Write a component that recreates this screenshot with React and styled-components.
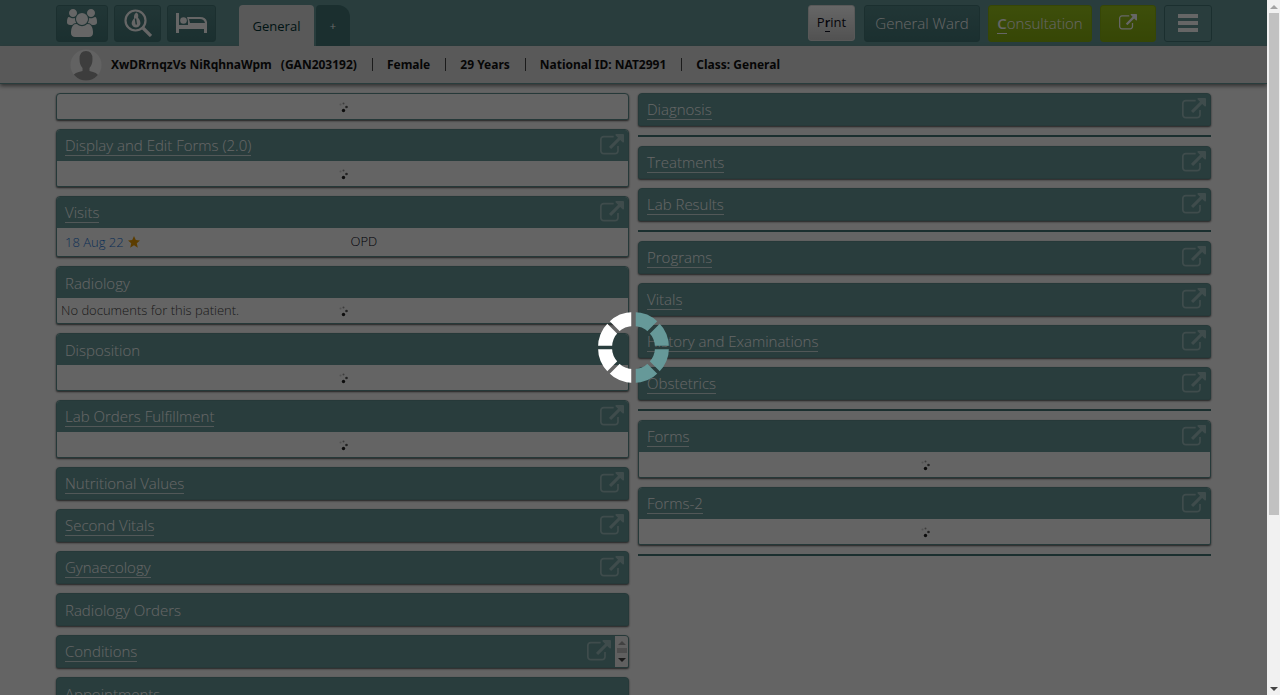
import React from "react";
import styled, { createGlobalStyle } from "styled-components";

const GlobalStyle = createGlobalStyle`
  * { box-sizing: border-box; }
  body { margin: 0; background: #fafafa; font-family: "Open Sans", sans-serif; color: #222; }
  button { font-family: inherit; }
`;

const Window = styled.div`
  display: grid;
  grid-template-columns: 1fr 13px;
  height: 100vh;
  overflow: hidden;
`;
const Page = styled.div`
  position: relative;
  overflow: hidden;
  background: #fafafa;
`;

const Header = styled.header`
  display: flex;
  justify-content: space-between;
  height: 46px;
  padding: 5px 55px 0 56px;
  background: #669999;
`;
const Group = styled.div`
  display: flex;
  gap: ${(p) => p.$gap}px;
`;
const ToolButton = styled.button`
  display: flex;
  align-items: center;
  justify-content: center;
  width: ${(p) => p.$width}px;
  height: 37px;
  padding: 0 0 2px;
  border: 1px solid #447777;
  border-radius: 3px;
  background: ${(p) => (p.$flat ? "transparent" : "linear-gradient(#558888, #447777)")};
  color: #fff;
  font-size: 15px;
  font-weight: 300;
`;
const GreenButton = styled(ToolButton)`
  border-color: #88b010;
  background: linear-gradient(#9ac41c, #88b010);
`;
const PrintButton = styled(ToolButton)`
  height: 36px;
  margin-right: 1px;
  border-color: #ddd;
  background: linear-gradient(#fff, #ccc);
  color: #112;
  font-size: 13px;
  font-weight: 400;
`;
const AccessKey = styled.span`
  font-weight: 600;
  border-bottom: 1px solid currentColor;
`;
const Tabs = styled.nav`
  display: flex;
  gap: 2px;
  margin-left: 17px;
`;
const Tab = styled.button`
  width: ${(p) => (p.$active ? 75 : 34)}px;
  height: 41px;
  padding: 0;
  border: 0;
  border-radius: ${(p) => (p.$active ? "4px 4px 0 0" : "4px 12px 0 0")};
  background: ${(p) => (p.$active ? "#dfdfdf" : "#447777")};
  color: ${(p) => (p.$active ? "#003333" : "#fff")};
  font-size: ${(p) => (p.$active ? 13 : 11)}px;
`;

const PatientBar = styled.section`
  display: flex;
  align-items: center;
  height: 38px;
  padding: 0 70px;
  background: #dfdfdf;
  border-bottom: 1px solid #669999;
  box-shadow: 0 2px 4px #777;
  font-family: "Noto Sans", sans-serif;
  font-size: 12px;
  font-weight: 700;
  color: #111;
`;
const PatientName = styled.span`
  margin: 0 9px;
`;
const Fact = styled.span`
  display: flex;
  align-items: center;
  &::before {
    content: "";
    width: 1px;
    height: 13px;
    margin: 0 14px 0 15px;
    background: #444;
  }
`;

const Columns = styled.main`
  display: grid;
  grid-template-columns: 1fr 1fr;
  gap: 9px;
  align-items: start;
  padding: 9px 56px 0;
`;
const Column = styled.div`
  display: flex;
  flex-direction: column;
  gap: 9px;
`;
const Card = styled.section`
  border: 1px solid #609090;
  border-radius: 4px 4px 2px 2px;
  background: ${(p) => (p.$headOnly ? "#669999" : "#fafafa")};
  box-shadow: 0 1px 2px #555;
  overflow: hidden;
`;
const CardHead = styled.div`
  display: flex;
  align-items: center;
  justify-content: space-between;
  height: 31px;
  padding-left: 8px;
  background: #669999;
`;
const CardTitle = styled.h2`
  margin: 0;
  font-size: 15px;
  line-height: 20px;
  font-weight: 300;
  color: #fff;
`;
const TitleLink = styled.a`
  display: block;
  color: inherit;
  text-decoration: none;
  border-bottom: 1px solid #ccdddd;
`;
const HeadTools = styled.div`
  display: flex;
  align-items: center;
  align-self: stretch;
`;
const OpenLink = styled.a`
  display: flex;
  margin-right: 4px;
  color: #9dbdbd;
`;
const CardBody = styled.div`
  display: grid;
  grid-template-columns: 1fr 1fr;
  align-items: center;
  height: ${(p) => (p.$tall ? 28 : 25)}px;
  font-size: 13px;
  font-weight: 300;
`;
const VisitDate = styled.a`
  display: flex;
  align-items: center;
  gap: 4px;
  padding-left: 8px;
  color: #1f78d8;
  text-decoration: none;
`;
const VisitType = styled.span`
  padding: 0 0 2px 8px;
  color: #001;
`;
const Note = styled.span`
  grid-area: 1 / 1;
  padding: 0 0 2px 4px;
  color: #444;
`;
const Busy = styled.span`
  display: flex;
  grid-area: 1 / 1 / 2 / 3;
  justify-self: center;
`;
const Rule = styled.hr`
  width: 100%;
  height: 2px;
  margin: 0;
  border: 0;
  background: #447777;
`;

const ScrollTrack = styled.div`
  display: flex;
  flex-direction: column;
  align-items: center;
  width: 13px;
  height: 100%;
  padding: ${(p) => (p.$small ? "2px 0" : "0")};
  background: #f1f1f1;
`;
const ScrollLane = styled.div`
  flex: 1;
  width: 10px;
`;
const ScrollThumb = styled.div`
  height: ${(p) => (p.$small ? "5px" : "75%")};
  background: #c1c1c1;
`;
const ArrowBox = styled.span`
  display: flex;
  align-items: center;
  justify-content: center;
  height: ${(p) => (p.$small ? 10 : 13)}px;
`;

const Shade = styled.div`
  position: absolute;
  inset: 0;
  display: flex;
  align-items: center;
  justify-content: center;
  background: rgba(0, 0, 0, 0.6);
`;

const ExternalIcon = ({ size }) => (
  <svg width={size} height={size} viewBox="0 0 1792 1792" fill="currentColor" aria-hidden="true">
    <path d="M1408 928v320q0 119-84.500 203.500t-203.500 84.500h-832q-119 0-203.500-84.500t-84.500-203.500v-832q0-119 84.500-203.500t203.500-84.500h704q14 0 23 9t9 23v64q0 14-9 23t-23 9h-704q-66 0-113 47t-47 113v832q0 66 47 113t113 47h832q66 0 113-47t47-113v-320q0-14 9-23t23-9h64q14 0 23 9t9 23zm384-864v512q0 26-19 45t-45 19-45-19l-176-176-652 652q-10 10-23 10t-23-10l-114-114q-10-10-10-23t10-23l652-652-176-176q-19-19-19-45t19-45 45-19h512q26 0 45 19t19 45z" />
  </svg>
);
const UsersIcon = () => (
  <svg width="30" height="28" viewBox="0 0 1920 1792" fill="currentColor" aria-hidden="true">
    <path d="M593 896q-162 5-265 128h-134q-82 0-138-40.500t-56-118.500q0-353 124-353 6 0 43.500 21t97.500 42.500 119 21.500q67 0 133-23-5 37-5 66 0 139 81 256zm1071 637q0 120-73 189.500t-194 69.500h-874q-121 0-194-69.500t-73-189.500q0-53 3.500-103.500t14-109 26.500-108.500 43-97.500 62-81 85.500-53.500 111.500-20q10 0 43 21.500t73 48 107 48 135 21.500 135-21.500 107-48 73-48 43-21.500q61 0 111.500 20t85.500 53.500 62 81 43 97.500 26.500 108.500 14 109 3.500 103.500zm-1024-1277q0 106-75 181t-181 75-181-75-75-181 75-181 181-75 181 75 75 181zm704 384q0 159-112.500 271.500t-271.500 112.500-271.500-112.500-112.500-271.500 112.500-271.500 271.500-112.500 271.500 112.500 112.500 271.500zm576 225q0 78-56 118.500t-138 40.500h-134q-103-123-265-128 81-117 81-256 0-29-5-66 66 23 133 23 59 0 119-21.500t97.500-42.500 43.500-21q124 0 124 353zm-128-609q0 106-75 181t-181 75-181-75-75-181 75-181 181-75 181 75 75 181z" />
  </svg>
);
const SearchIcon = () => (
  <svg width="28" height="28" viewBox="0 0 28 28" fill="none" stroke="currentColor" aria-hidden="true">
    <circle cx="11.500" cy="11.500" r="10" strokeWidth="2.200" />
    <path d="M19 19L27 27" strokeWidth="3.200" />
    <path d="M12.500 3.500q2.500 1.500 1.500 5q3.500 4.500 2 7.500q-1.500 2.500-4 2.500t-4-2.500q-1.300-3 2-6.500q-.5-4.500 2.500-6z" fill="currentColor" stroke="none" />
    <path d="M11.500 9.500l.8 6" stroke="#4d8080" strokeWidth="1.500" />
  </svg>
);
const BedIcon = () => (
  <svg width="31" height="20" viewBox="0 0 31 20" fill="currentColor" aria-hidden="true">
    <path d="M0 0h3v12h28v8h-3v-4H3v4H0z" />
    <circle cx="7.500" cy="7.500" r="3.300" />
    <path d="M11 4h13q6 0 7 5v4H12V8z" />
    <path d="M13 6h11q4 0 5 4H14z" fill="#4d8080" />
  </svg>
);
const MenuIcon = () => (
  <svg width="20" height="18" viewBox="0 0 20 18" fill="currentColor" aria-hidden="true">
    <path d="M0 0h20v4H0zM0 7h20v4H0zM0 14h20v4H0z" />
  </svg>
);
const Avatar = () => (
  <svg width="32" height="32" viewBox="0 0 32 32" aria-label="Patient photo" role="img">
    <clipPath id="face"><circle cx="16" cy="16" r="15.500" /></clipPath>
    <g clipPath="url(#face)">
      <rect width="32" height="32" fill="#f5f5f5" />
      <path d="M9.500 10q0-8 6.500-8t6.500 8q0 6-3 9v3q8 1.500 9 5v5H3v-5q1-3.500 9.500-5v-3q-3-3-3-9z" fill="#999" />
    </g>
  </svg>
);
const BusyDots = () => (
  <svg width="12" height="12" viewBox="0 0 12 12" aria-label="Loading" role="img">
    <circle cx="6.500" cy="9.500" r="1.700" fill="#222" />
    <circle cx="9.500" cy="6" r="1.300" fill="#555" />
    <circle cx="6.500" cy="2.500" r="1" fill="#999" />
    <circle cx="3.500" cy="3.500" r="1" fill="#ccc" />
  </svg>
);
const Star = () => (
  <svg width="12" height="12" viewBox="0 0 12 12" fill="#e69a00" aria-label="Active visit" role="img">
    <path d="M6 0l1.800 4 4.200.4-3.200 2.800 1 4.500L6 9.300l-3.800 2.400 1-4.500L0 4.400 4.200 4z" />
  </svg>
);
const Wheel = () => (
  <svg width="71" height="71" viewBox="0 0 71 71" fill="none" strokeWidth="14" role="img" aria-label="Loading">
    <mask id="spokes" maskUnits="userSpaceOnUse" x="0" y="0" width="71" height="71">
      <rect width="71" height="71" fill="#fff" />
      <path d="M0 35.500H71M10 10L61 61M61 10L10 61" stroke="#000" strokeWidth="3.500" />
      <path d="M35.500 0V71" stroke="#000" strokeWidth="4.500" />
    </mask>
    <g mask="url(#spokes)">
      <path d="M35.500 64A28.500 28.500 0 0 1 35.500 7" stroke="#fff" />
      <path d="M35.500 7A28.500 28.500 0 0 1 35.500 64" stroke="#669999" />
    </g>
  </svg>
);
const Arrow = ({ up, pale, small }) => (
  <ArrowBox $small={small}>
    <svg width="8" height="4" viewBox="0 0 8 4" fill={pale ? "#a3a3a3" : "#444"} aria-hidden="true">
      <path d={up ? "M0 4L4 0L8 4z" : "M0 0L4 4L8 0z"} />
    </svg>
  </ArrowBox>
);
const ScrollBar = ({ small }) => (
  <ScrollTrack $small={small}>
    <Arrow up pale small={small} />
    <ScrollLane><ScrollThumb $small={small} /></ScrollLane>
    <Arrow small={small} />
  </ScrollTrack>
);

const Loading = () => <Busy><BusyDots /></Busy>;

function Panel({ title, plain, scroll, tall, children }) {
  return (
    <Card $headOnly={!children}>
      {title && (
        <CardHead>
          <CardTitle>{plain ? title : <TitleLink href="#">{title}</TitleLink>}</CardTitle>
          <HeadTools>
            {!plain && <OpenLink href="#" aria-label={"Open " + title}><ExternalIcon size={24} /></OpenLink>}
            {scroll && <ScrollBar small />}
          </HeadTools>
        </CardHead>
      )}
      {children && <CardBody $tall={tall}>{children}</CardBody>}
    </Card>
  );
}

export default function App() {
  return (
    <Window>
      <GlobalStyle />
      <Page>
        <Header>
          <Group $gap={6}>
            <ToolButton $width={52} aria-label="Patients"><UsersIcon /></ToolButton>
            <ToolButton $width={47} aria-label="Search"><SearchIcon /></ToolButton>
            <ToolButton $width={49} aria-label="Wards"><BedIcon /></ToolButton>
            <Tabs>
              <Tab $active>General</Tab>
              <Tab>+</Tab>
            </Tabs>
          </Group>
          <Group $gap={8}>
            <PrintButton $width={47}><span>P<AccessKey>r</AccessKey>int</span></PrintButton>
            <ToolButton $width={116}>General Ward</ToolButton>
            <GreenButton $width={104}><span><AccessKey>C</AccessKey>onsultation</span></GreenButton>
            <GreenButton $width={56} aria-label="Open in new window"><ExternalIcon size={18} /></GreenButton>
            <ToolButton $width={48} $flat aria-label="Menu"><MenuIcon /></ToolButton>
          </Group>
        </Header>
        <PatientBar>
          <Avatar />
          <PatientName>XwDRrnqzVs NiRqhnaWpm</PatientName>
          <span>(GAN203192)</span>
          <Fact>Female</Fact>
          <Fact>29 Years</Fact>
          <Fact>National ID: NAT2991</Fact>
          <Fact>Class: General</Fact>
        </PatientBar>
        <Columns>
          <Column>
            <Panel><Loading /></Panel>
            <Panel title="Display and Edit Forms (2.0)"><Loading /></Panel>
            <Panel title="Visits" tall>
              <VisitDate href="#">18 Aug 22 <Star /></VisitDate>
              <VisitType>OPD</VisitType>
            </Panel>
            <Panel title="Radiology" plain>
              <Note>No documents for this patient.</Note>
              <Loading />
            </Panel>
            <Panel title="Disposition" plain><Loading /></Panel>
            <Panel title="Lab Orders Fulfillment"><Loading /></Panel>
            <Panel title="Nutritional Values" />
            <Panel title="Second Vitals" />
            <Panel title="Gynaecology" />
            <Panel title="Radiology Orders" plain />
            <Panel title="Conditions" scroll />
            <Panel title="Appointments" plain />
          </Column>
          <Column>
            <Panel title="Diagnosis" />
            <Rule />
            <Panel title="Treatments" />
            <Panel title="Lab Results" />
            <Rule />
            <Panel title="Programs" />
            <Panel title="Vitals" />
            <Panel title="History and Examinations" />
            <Panel title="Obstetrics" />
            <Rule />
            <Panel title="Forms"><Loading /></Panel>
            <Panel title="Forms-2"><Loading /></Panel>
            <Rule />
          </Column>
        </Columns>
        <Shade><Wheel /></Shade>
      </Page>
      <ScrollBar />
    </Window>
  );
}
